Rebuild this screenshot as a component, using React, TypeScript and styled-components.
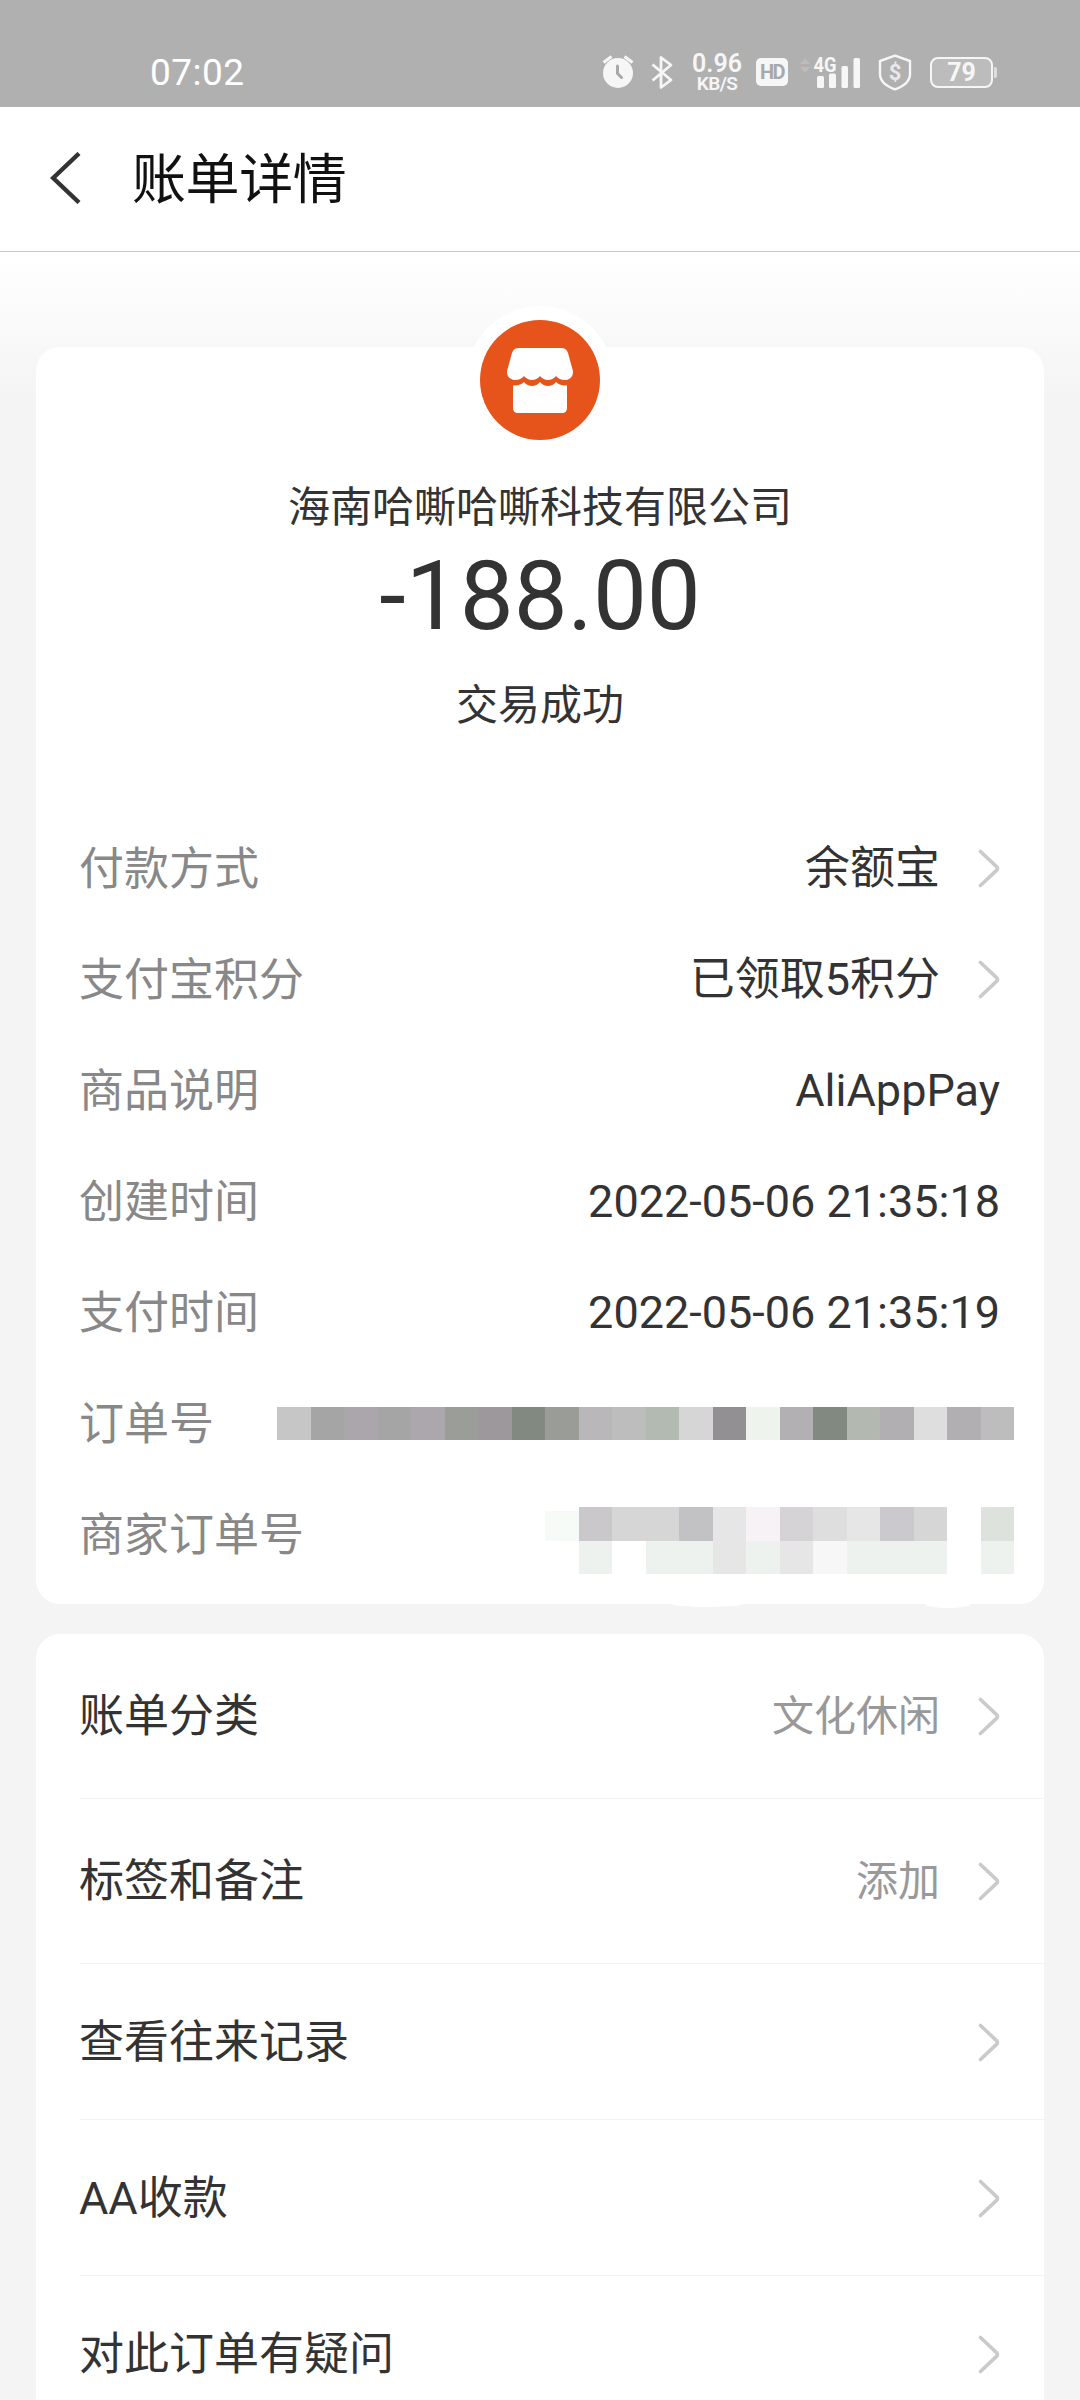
import React from "react";
import styled, { createGlobalStyle } from "styled-components";

const GlobalStyle = createGlobalStyle`
  * { box-sizing: border-box; }
  html, body { margin: 0; padding: 0; background: #f4f4f4; }
  body { font-family: Roboto, "Noto Sans CJK SC", sans-serif; color: #333; }
`;

const Screen = styled.main`
  width: 1080px;
  height: 2400px;
  overflow: hidden;
  display: flex;
  flex-direction: column;
  background: #f4f4f4;
`;

const StatusBar = styled.header`
  height: 107px;
  flex: none;
  display: flex;
  justify-content: space-between;
  padding: 39px 83px 0 150px;
  background: #b0b0b0;
  color: #f6f6f6;
`;

const Clock = styled.span`
  font-size: 37px;
  line-height: 68px;
  letter-spacing: 0.5px;
  color: #fff;
`;

const StatusIcons = styled.div`
  display: flex;
  align-items: center;
  height: 66px;
  svg { display: block; }
`;

const Slot = styled.div<{ $w: number; $before?: number }>`
  width: ${(p) => p.$w}px;
  margin-left: ${(p) => p.$before ?? 0}px;
  flex: none;
  display: flex;
  justify-content: center;
`;

const NetSpeed = styled.div`
  display: flex;
  flex-direction: column;
  align-items: center;
  padding-top: 3px;
  font-weight: 600;
  white-space: nowrap;
`;

const SpeedValue = styled.span`
  font-size: 25px;
  line-height: 20px;
`;

const SpeedUnit = styled.span`
  font-size: 19px;
  line-height: 20px;
  letter-spacing: -0.6px;
`;

const HdBadge = styled.span`
  width: 32px;
  height: 28px;
  border-radius: 5px;
  background: #f6f6f6;
  color: #a8a8a8;
  font-size: 20px;
  font-weight: 700;
  line-height: 29px;
  text-align: center;
  letter-spacing: -1.5px;
`;

const Battery = styled.div`
  display: flex;
  align-items: center;
  gap: 1px;
`;

const BatteryBody = styled.span`
  width: 63px;
  height: 31px;
  border: 2.4px solid #f6f6f6;
  border-radius: 8px;
  background: #bcbcbc;
  font-size: 25px;
  font-weight: 700;
  line-height: 27px;
  text-align: center;
`;

const BatteryTip = styled.span`
  width: 3px;
  height: 11px;
  border-radius: 0 2px 2px 0;
  background: #dedede;
`;

const TitleBar = styled.div`
  height: 145px;
  flex: none;
  display: flex;
  align-items: center;
  padding: 0 0 2px 50px;
  background: #fff;
  border-bottom: 1px solid #c9c9c9;
`;

const BackButton = styled.button`
  width: 31px;
  height: 52px;
  padding: 0;
  border: 0;
  background: none;
  svg { display: block; }
`;

const Title = styled.h1`
  margin: 0 0 0 51px;
  padding-top: 6px;
  font-size: 54px;
  line-height: 80px;
  font-weight: 400;
  letter-spacing: -0.4px;
  color: #111;
`;

const Content = styled.div`
  flex: 1;
  min-height: 0;
  display: flex;
  flex-direction: column;
  gap: 30px;
  padding: 95px 36px 0;
  background: linear-gradient(#ffffff 0, #f4f4f4 150px);
`;

const Card = styled.section`
  flex: none;
  position: relative;
  background: #fff;
  border-radius: 24px;
`;

const SummaryCard = styled(Card)`
  height: 1257px;
  display: flex;
  flex-direction: column;
  align-items: stretch;
`;

const Avatar = styled.div`
  align-self: center;
  width: 148px;
  height: 148px;
  margin-top: -41px;
  padding: 14px;
  border-radius: 50%;
  background: #fff;
  svg { display: block; }
`;

const Merchant = styled.div`
  margin-top: 23px;
  text-align: center;
  font-size: 42px;
  line-height: 62px;
`;

const Amount = styled.div`
  margin-top: 1px;
  text-align: center;
  font-size: 96px;
  line-height: 112px;
`;

const Result = styled.div`
  margin-top: 23px;
  text-align: center;
  font-size: 42px;
  line-height: 62px;
`;

const Details = styled.div`
  margin-top: 76px;
  padding: 0 30px 0 43px;
`;

const DetailRow = styled.div`
  height: 111px;
  display: flex;
  align-items: center;
  justify-content: space-between;
  padding-right: 14px;
  font-size: 45px;
  line-height: 66px;
`;

const MaskedRow = styled(DetailRow)`
  padding-right: 0;
`;

const Label = styled.span`
  padding-top: 2px;
  color: #888;
`;

const Value = styled.span`
  display: flex;
  align-items: center;
  gap: 38px;
`;

const Mosaic = styled.div<{ $shift?: number }>`
  display: flex;
  flex-direction: column;
  margin-top: ${(p) => p.$shift ?? 0}px;
`;

const MosaicLine = styled.div`
  display: flex;
`;

const MosaicCell = styled.span<{ $color: string; $top?: number }>`
  width: 33.5px;
  height: ${(p) => 33.5 - (p.$top ?? 0)}px;
  margin-top: ${(p) => p.$top ?? 0}px;
  background: ${(p) => p.$color};
`;

const Smudge = styled.span<{ $x: number; $w: number; $drop: number }>`
  position: absolute;
  left: ${(p) => p.$x}px;
  bottom: ${(p) => -p.$drop}px;
  width: ${(p) => p.$w}px;
  height: ${(p) => p.$drop * 2}px;
  border-radius: 50%;
  background: #fff;
`;

const MenuCard = styled(Card)`
  height: 800px;
  padding-left: 44px;
`;

const MenuRow = styled.div<{ $h: number }>`
  height: ${(p) => p.$h}px;
  display: flex;
  align-items: center;
  justify-content: space-between;
  padding: 2px 44px 0 0;
  border-bottom: 1px solid #f3f3f3;
  font-size: 45px;
  line-height: 66px;
`;

const MenuLabel = styled.span`
  margin-left: -1px;
`;

const MenuValue = styled(Value)`
  font-size: 42px;
  color: #999;
`;

const ChevronSvg = styled.svg`
  display: block;
  width: 22px;
  height: 40px;
`;

const Chevron = () => (
  <ChevronSvg viewBox="0 0 22 40" fill="none" stroke="#cacaca" strokeWidth="3.6" strokeLinecap="round">
    <path d="M2.5 2.500 L18.500 17.600 Q20.500 19.500 18.500 21.400 L2.500 36.500" />
  </ChevronSvg>
);

const AlarmIcon = () => (
  <svg width="32" height="36" viewBox="0 0 32 36" fill="none">
    <circle cx="16" cy="19" r="15" fill="#f6f6f6" />
    <path d="M1.5 8.5 L9.5 2.5 M22.5 2.5 L30.5 8.5" stroke="#f6f6f6" strokeWidth="3" />
    <path d="M15.5 12 V19.5 L19.5 23.5" stroke="#a8a8a8" strokeWidth="3" strokeLinecap="round" />
  </svg>
);

const BluetoothIcon = () => (
  <svg width="23" height="35" viewBox="0 0 23 35" fill="none" stroke="#f6f6f6" strokeWidth="2.8" strokeLinejoin="round">
    <path d="M1.5 9.5 L20 25 L10 32.5 V2.5 L20 10 L1.5 25.5" />
  </svg>
);

const SignalIcon = () => (
  <svg width="62" height="34" viewBox="0 0 62 34">
    <path d="M1 9 L6 3 L11 9 Z M1 12 L6 18 L11 12 Z" fill="#bcbcbc" />
    <text x="14.500" y="16.500" fontSize="20" fontWeight="700" textLength="23" lengthAdjust="spacingAndGlyphs" fill="#f6f6f6">
      4G
    </text>
    <g fill="#f6f6f6">
      <rect x="18" y="21" width="7" height="12" rx="1.5" />
      <rect x="30" y="18.500" width="7" height="14.500" rx="1.5" />
      <rect x="42.5" y="11" width="6.5" height="22" rx="1.5" />
      <rect x="54.5" y="3" width="6.5" height="30" rx="1.5" />
    </g>
  </svg>
);

const ShieldIcon = () => (
  <svg width="34" height="37" viewBox="0 0 34 37" fill="none">
    <path
      d="M17 1.6 L32 7 V20 C32 28 25 32.5 17 35.4 C9 32.5 2 28 2 20 V7 Z"
      stroke="#f6f6f6"
      strokeWidth="2.4"
      strokeLinejoin="round"
    />
    <text x="17" y="26" fontSize="22" fontWeight="700" textAnchor="middle" fill="#e8e8e8">
      $
    </text>
  </svg>
);

const ShopIcon = () => (
  <svg width="120" height="120" viewBox="0 0 120 120">
    <circle cx="60" cy="60" r="60" fill="#e6541c" />
    <g fill="#fff">
      <path d="M39 28 H81 Q86.500 28 88 33 L92.700 50 C94 56 90 60 85 60 C81 60 78 58.500 76 56 C74 58.500 71 60 68 60 C65 60 62 58.500 60 56 C58 58.500 55 60 52 60 C49 60 46 58.500 44 56 C42 58.500 39 60 35 60 C30 60 26 56 27.300 50 L32 33 Q33.500 28 39 28 Z" />
      <path d="M33 65.500 C38 66 41.500 64.500 44 62 C46 64.500 49 66 52 66 C55 66 58 64.500 60 62 C62 64.500 65 66 68 66 C71 66 74 64.500 76 62 C78.500 64.500 82 66 87 65.500 V88 Q87 93 82 93 H38 Q33 93 33 88 Z" />
    </g>
  </svg>
);

const orderMask = [
  "#c6c6c6", "#a5a5a5", "#aba6ac", "#a4a5a4", "#aba7ac", "#9b9d98", "#9c989c", "#818981",
  "#9a9c98", "#bab7bb", "#bdbdbd", "#b3bab2", "#d6d6d6", "#939094", "#eef3ee", "#b2b0b3",
  "#818981", "#b3b8b1", "#b2afb3", "#dedede", "#b2afb3", "#bdbdbd",
];

const merchantMaskTop = [
  "#f7fbf7", "#cbc8cc", "#d6d6d6", "#d6d6d6", "#c2c1c3", "#e6e6e6", "#f7f2f6",
  "#d6d3d7", "#dedede", "#e6e6e6", "#cbc9cd", "#d6d6d6", "#ffffff", "#dde3dc",
];

const merchantMaskBottom = [
  "#ffffff", "#edf2ee", "#ffffff", "#edf2ee", "#edf2ee", "#e6e6e6", "#edf2ee",
  "#e6e6e6", "#f7f7f7", "#edf2ee", "#edf2ee", "#edf2ee", "#ffffff", "#edf2ee",
];

const details = [
  { label: "付款方式", value: "余额宝", link: true },
  { label: "支付宝积分", value: "已领取5积分", link: true },
  { label: "商品说明", value: "AliAppPay" },
  { label: "创建时间", value: "2022-05-06 21:35:18" },
  { label: "支付时间", value: "2022-05-06 21:35:19" },
];

const menu = [
  { label: "账单分类", value: "文化休闲", height: 165 },
  { label: "标签和备注", value: "添加", height: 165 },
  { label: "查看往来记录", height: 156 },
  { label: "AA收款", height: 156 },
  { label: "对此订单有疑问", height: 156 },
];

export default function App() {
  return (
    <Screen>
      <GlobalStyle />
      <StatusBar>
        <Clock>07:02</Clock>
        <StatusIcons>
          <Slot $w={32}><AlarmIcon /></Slot>
          <Slot $w={23} $before={17}><BluetoothIcon /></Slot>
          <Slot $w={48} $before={19}>
            <NetSpeed>
              <SpeedValue>0.96</SpeedValue>
              <SpeedUnit>KB/S</SpeedUnit>
            </NetSpeed>
          </Slot>
          <Slot $w={32} $before={15}><HdBadge>HD</HdBadge></Slot>
          <Slot $w={62} $before={11}><SignalIcon /></Slot>
          <Slot $w={34} $before={17}><ShieldIcon /></Slot>
          <Slot $w={67} $before={18}>
            <Battery>
              <BatteryBody>79</BatteryBody>
              <BatteryTip />
            </Battery>
          </Slot>
        </StatusIcons>
      </StatusBar>

      <TitleBar>
        <BackButton aria-label="返回">
          <svg width="31" height="52" viewBox="0 0 31 52" fill="none" stroke="#333" strokeWidth="4.400">
            <path d="M29 1.500 L3.200 26 L29 50.500" />
          </svg>
        </BackButton>
        <Title>账单详情</Title>
      </TitleBar>

      <Content>
        <SummaryCard>
          <Avatar><ShopIcon /></Avatar>
          <Merchant>海南哈嘶哈嘶科技有限公司</Merchant>
          <Amount>-188.00</Amount>
          <Result>交易成功</Result>
          <Details>
            {details.map((d) => (
              <DetailRow key={d.label}>
                <Label>{d.label}</Label>
                <Value>
                  {d.value}
                  {d.link && <Chevron />}
                </Value>
              </DetailRow>
            ))}
            <MaskedRow>
              <Label>订单号</Label>
              <Mosaic>
                <MosaicLine>
                  {orderMask.map((c, i) => <MosaicCell key={i} $color={c} />)}
                </MosaicLine>
              </Mosaic>
            </MaskedRow>
            <MaskedRow>
              <Label>商家订单号</Label>
              <Mosaic $shift={12}>
                <MosaicLine>
                  {merchantMaskTop.map((c, i) => <MosaicCell key={i} $color={c} $top={i === 0 ? 4 : 0} />)}
                </MosaicLine>
                <MosaicLine>
                  {merchantMaskBottom.map((c, i) => <MosaicCell key={i} $color={c} />)}
                </MosaicLine>
              </Mosaic>
            </MaskedRow>
          </Details>
          <Smudge $x={636} $w={70} $drop={3} />
          <Smudge $x={889} $w={46} $drop={4} />
        </SummaryCard>

        <MenuCard>
          {menu.map((m) => (
            <MenuRow key={m.label} $h={m.height}>
              <MenuLabel>{m.label}</MenuLabel>
              <MenuValue>
                {m.value}
                <Chevron />
              </MenuValue>
            </MenuRow>
          ))}
        </MenuCard>
      </Content>
    </Screen>
  );
}
